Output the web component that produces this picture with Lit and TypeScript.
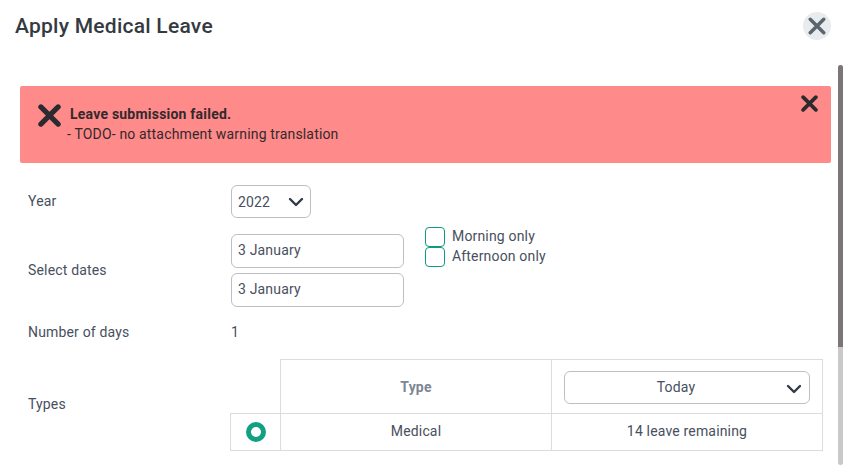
import { LitElement, html, css } from "lit";
import { customElement } from "lit/decorators.js";

const chevron = html`<svg class="chev" width="16" height="10" viewBox="0 0 16 10"><path d="M2 2l6 6 6-6" fill="none" stroke="#2f3a4a" stroke-width="2.4" stroke-linecap="round" stroke-linejoin="round"/></svg>`;
const cross = (size: number, color: string, w: number) => html`<svg width=${size} height=${size} viewBox="0 0 24 24"><path d="M3 3l18 18M21 3L3 21" fill="none" stroke=${color} stroke-width=${w} stroke-linecap="round"/></svg>`;

@customElement("app-root")
export class AppRoot extends LitElement {
  static styles = css`
    :host { display: block; width: 852px; height: 470px; overflow: hidden; background: #fff; font-family: Roboto, "Liberation Sans", sans-serif; font-size: 14px; letter-spacing: 0.17px; color: #484f5e; }
    .header { display: flex; justify-content: space-between; align-items: center; height: 52px; padding: 0 21px 0 15px; box-sizing: border-box; }
    h1 { margin: 0; font-size: 21px; font-weight: 500; letter-spacing: 0.25px; color: #343a40; }
    .close { width: 28px; height: 28px; border-radius: 50%; background: #e9ecef; display: flex; align-items: center; justify-content: center; }
    .main { display: flex; height: 418px; }
    .content { width: 811px; margin-left: 20px; padding-top: 34px; }
    .alert { height: 77px; background: #ff8a8a; border-radius: 2px; display: flex; position: relative; color: #33292c; box-sizing: border-box; padding: 18px 0 0 18px; }
    .alert .x { width: 23px; height: 23px; margin-right: 6px; }
    .msg { line-height: 20px; }
    .msg b { display: block; font-weight: 700; letter-spacing: 0.22px; margin-left: 3px; }
    .dismiss { position: absolute; right: 13px; top: 9px; display: flex; }
    .row { display: flex; align-items: center; padding-left: 8px; }
    .label { width: 203px; flex: none; padding-bottom: 2px; }
    .year { margin-top: 22px; }
    .select { border: 1px solid #bdbfc4; border-radius: 6px; height: 33px; box-sizing: border-box; display: flex; align-items: center; background: #fff; }
    .year .select { width: 80px; padding: 0 6px; justify-content: space-between; }
    .dates { margin-top: 16px; align-items: center; }
    .inputs { display: flex; flex-direction: column; gap: 5px; }
    .input { width: 173px; height: 34px; border: 1px solid #bdbfc4; border-radius: 6px; box-sizing: border-box; padding: 0 6px 2px; display: flex; align-items: center; }
    .checks { display: flex; flex-direction: column; margin-left: 21px; align-self: flex-start; margin-top: -7px; }
    .check { display: flex; align-items: center; height: 20px; gap: 7px; }
    .check span { padding-bottom: 2px; }
    .box { width: 20px; height: 20px; box-sizing: border-box; border: 1.5px solid #119a80; border-radius: 4px; }
    .days { margin-top: 16px; height: 18px; }
    .days .label { padding-bottom: 0; }
    .types { margin-top: 18px; }
    .table { display: grid; grid-template-columns: 51px 271px 271px; grid-template-rows: 54px 38px; width: 593px; margin-left: -1px; }
    .cell { display: flex; align-items: center; justify-content: center; border: 1px solid #dcdcdc; border-left: 0; border-bottom: 0; box-sizing: border-box; }
    .cell.blank { border: 0; border-right: 1px solid #dcdcdc; }
    .cell.bottom { border-top: 1px solid #dcdcdc; border-bottom: 1px solid #dcdcdc; padding-bottom: 2px; }
    .cell.first { border-left: 1px solid #dcdcdc; padding-bottom: 0; }
    .cell.h { font-weight: 700; color: #7d8695; }
    .cell.head-sel { padding: 2px 12px 0; }
    .today { width: 100%; position: relative; justify-content: center; padding: 0 22px 2px 0; }
    .today .chev { position: absolute; right: 7px; top: 12px; }
    .radio { width: 20px; height: 20px; box-sizing: border-box; border-radius: 50%; border: 5.5px solid #11a083; background: #fff; }
    .scroll { width: 5px; margin-left: 7px; margin-top: 13px; height: 400px; background: #c9c9c9; border-radius: 3px; overflow: hidden; }
    .thumb { height: 282px; background: #7a7576; }
  `;

  render() {
    return html`
      <div class="header">
        <h1>Apply Medical Leave</h1>
        <div class="close">${cross(18, "#5a6570", 4.6)}</div>
      </div>
      <div class="main">
        <div class="content">
          <div class="alert">
            <div class="x">${cross(23, "#2b2b2f", 5.4)}</div>
            <div class="msg"><b>Leave submission failed.</b>- TODO- no attachment warning translation</div>
            <div class="dismiss">${cross(17, "#2b2b2f", 5.2)}</div>
          </div>
          <div class="row year"><div class="label">Year</div><div class="select"><span>2022</span>${chevron}</div></div>
          <div class="row dates">
            <div class="label">Select dates</div>
            <div class="inputs"><div class="input">3 January</div><div class="input">3 January</div></div>
            <div class="checks">
              <div class="check"><div class="box"></div><span>Morning only</span></div>
              <div class="check"><div class="box"></div><span>Afternoon only</span></div>
            </div>
          </div>
          <div class="row days"><div class="label">Number of days</div><div>1</div></div>
          <div class="row types">
            <div class="label">Types</div>
            <div class="table">
              <div class="cell blank"></div>
              <div class="cell h">Type</div>
              <div class="cell head-sel"><div class="select today"><span>Today</span>${chevron}</div></div>
              <div class="cell bottom first"><div class="radio"></div></div>
              <div class="cell bottom">Medical</div>
              <div class="cell bottom">14 leave remaining</div>
            </div>
          </div>
        </div>
        <div class="scroll"><div class="thumb"></div></div>
      </div>
    `;
  }
}
